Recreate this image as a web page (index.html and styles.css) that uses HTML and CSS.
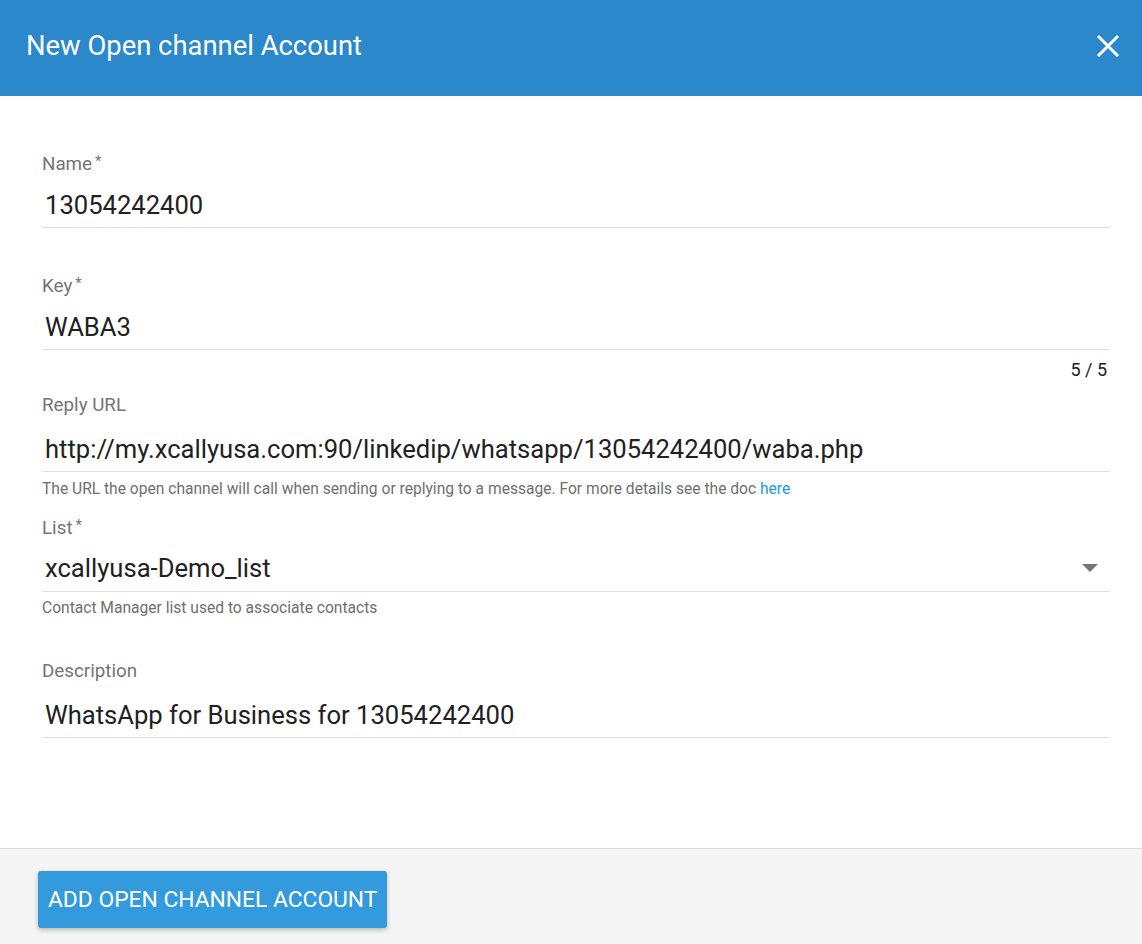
FILE: index.html
```html
<!DOCTYPE html>
<html lang="en">
<head>
  <meta charset="UTF-8">
  <title>New Open channel Account</title>
  <link rel="stylesheet" href="styles.css">
</head>
<body>

<div class="dialog">
  <div class="dialog-head">
    <h2 class="dialog-title">New Open channel Account</h2>
    <button class="close-btn" type="button" aria-label="Close">
      <svg width="24" height="24" viewBox="0 0 24 24">
        <path d="M2 2 L22 22 M22 2 L2 22" stroke="#fff" stroke-width="3" fill="none"/>
      </svg>
    </button>
  </div>

  <form class="dialog-body" onsubmit="return false">
    <div class="field">
      <label class="field-label">Name<span class="req">*</span></label>
      <div class="field-row"><input class="field-input" type="text" value="13054242400"></div>
      <div class="field-sub"></div>
    </div>

    <div class="field">
      <label class="field-label">Key<span class="req">*</span></label>
      <div class="field-row"><input class="field-input" type="text" value="WABA3"></div>
      <div class="field-sub"><span class="counter">5 / 5</span></div>
    </div>

    <div class="field">
      <label class="field-label">Reply URL</label>
      <div class="field-row"><input class="field-input" type="text" value="http://my.xcallyusa.com:90/linkedip/whatsapp/13054242400/waba.php"></div>
      <div class="field-sub short"><span class="hint">The URL the open channel will call when sending or replying to a message. For more details see the doc <a href="#">here</a></span></div>
    </div>

    <div class="field">
      <label class="field-label">List<span class="req">*</span></label>
      <div class="field-row">
        <span class="field-value">xcallyusa-Demo_list</span>
        <span class="caret"></span>
      </div>
      <div class="field-sub tall"><span class="hint">Contact Manager list used to associate contacts</span></div>
    </div>

    <div class="field">
      <label class="field-label">Description</label>
      <div class="field-row"><input class="field-input" type="text" value="WhatsApp for Business for 13054242400"></div>
    </div>
  </form>

  <div class="dialog-foot">
    <button class="primary-btn" type="button">Add Open channel Account</button>
  </div>
</div>

</body>
</html>
```

FILE: styles.css
```css
body {
  margin: 0;
  font-family: Roboto, "Liberation Sans", sans-serif;
  background-color: #fff;
  color: #212121;
}
.dialog {
  width: 1142px;
  height: 944px;
  display: flex;
  flex-direction: column;
}
.dialog-head {
  height: 96px;
  background-color: #2a88cb;
  display: flex;
  align-items: center;
  justify-content: space-between;
  padding: 0 22px 0 26px;
  flex-shrink: 0;
}
.dialog-title {
  margin: 0 0 4px 0;
  font-size: 27.4px;
  font-weight: 400;
  color: #fff;
}
.close-btn {
  border: none;
  background: none;
  padding: 0;
  width: 24px;
  height: 24px;
  margin-bottom: 4px;
  cursor: pointer;
}
.dialog-body {
  flex: 1;
  padding: 53px 32px 0 42px;
}
.field-label {
  display: block;
  height: 24px;
  line-height: 24px;
  font-size: 18.8px;
  color: #757575;
}
.req {
  font-size: 15px;
  vertical-align: 4px;
  margin-left: 3px;
}
.field-row {
  margin-top: 10px;
  height: 44px;
  border-bottom: 1px solid #e0e0e0;
  display: flex;
  align-items: center;
}
.field-input,
.field-value {
  flex: 1;
  border: none;
  outline: none;
  padding: 0 0 0 3px;
  margin: 0;
  font-family: Roboto, "Liberation Sans", sans-serif;
  font-size: 25.6px;
  color: #212121;
  background: transparent;
}
.field-value {
  padding-bottom: 3px;
}
.caret {
  width: 0;
  height: 0;
  border-left: 8px solid transparent;
  border-right: 8px solid transparent;
  border-top: 8px solid #757575;
  margin-right: 12px;
  margin-bottom: 2px;
}
.field-sub {
  min-height: 43px;
  padding-top: 8px;
  box-sizing: border-box;
  display: flex;
  flex-direction: column;
}
.field-sub.short {
  min-height: 41px;
  padding-top: 7px;
}
.field-sub.tall {
  min-height: 67px;
  padding-top: 6px;
}
.counter {
  align-self: flex-end;
  margin-right: 3px;
  font-size: 18px;
  line-height: 24px;
  color: #212121;
}
.hint {
  font-size: 15.6px;
  line-height: 20px;
  color: #6f6f6f;
}
.hint a {
  color: #2196f3;
  text-decoration: none;
}
.dialog-foot {
  height: 96px;
  flex-shrink: 0;
  border-top: 1px solid #dcdcdc;
  background-color: #f5f5f5;
  padding: 22px 0 0 38px;
  box-sizing: border-box;
}
.primary-btn {
  height: 57px;
  padding: 0 10px;
  border: none;
  border-radius: 3px;
  background-color: #339ade;
  color: #fff;
  font-family: Roboto, "Liberation Sans", sans-serif;
  font-size: 22.8px;
  text-transform: uppercase;
  box-shadow: 0 2px 5px rgba(0, 0, 0, 0.26);
  cursor: pointer;
}
```
